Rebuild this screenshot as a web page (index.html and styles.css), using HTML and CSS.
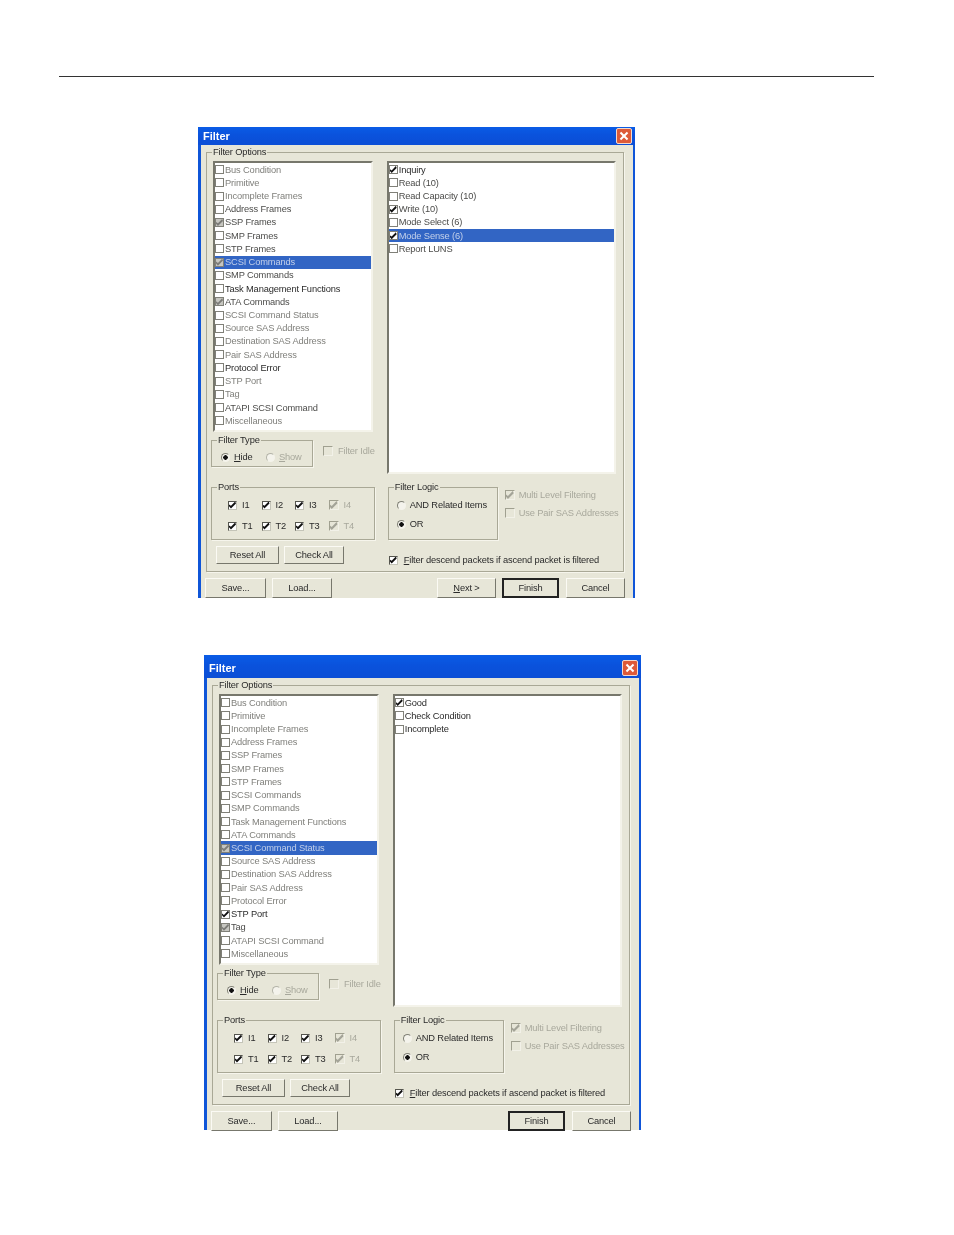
FILE: index.html
```html
<!DOCTYPE html>
<html lang="en">
<head>
<meta charset="utf-8">
<title>Filter</title>
<link rel="stylesheet" href="styles.css">
</head>
<body>
<div class="rule"></div>

<section class="dialog first">
  <div class="title"><span>Filter</span><b class="close"></b></div>
  <div class="options">
    <span class="legend">Filter Options</span>
    <div class="cols">
      <div class="left">
        <div class="list short">
          <div class="item dim"><i class="cb"></i>Bus Condition</div>
          <div class="item dim"><i class="cb"></i>Primitive</div>
          <div class="item dim"><i class="cb"></i>Incomplete Frames</div>
          <div class="item mid"><i class="cb"></i>Address Frames</div>
          <div class="item mid"><i class="cb grey on"></i>SSP Frames</div>
          <div class="item mid"><i class="cb"></i>SMP Frames</div>
          <div class="item mid"><i class="cb"></i>STP Frames</div>
          <div class="item sel"><i class="cb grey on"></i>SCSI Commands</div>
          <div class="item mid"><i class="cb"></i>SMP Commands</div>
          <div class="item"><i class="cb"></i>Task Management Functions</div>
          <div class="item mid"><i class="cb grey on"></i>ATA Commands</div>
          <div class="item dim"><i class="cb"></i>SCSI Command Status</div>
          <div class="item dim"><i class="cb"></i>Source SAS Address</div>
          <div class="item dim"><i class="cb"></i>Destination SAS Address</div>
          <div class="item dim"><i class="cb"></i>Pair SAS Address</div>
          <div class="item"><i class="cb"></i>Protocol Error</div>
          <div class="item dim"><i class="cb"></i>STP Port</div>
          <div class="item dim"><i class="cb"></i>Tag</div>
          <div class="item mid"><i class="cb"></i>ATAPI SCSI Command</div>
          <div class="item dim"><i class="cb"></i>Miscellaneous</div>
        </div>
        <div class="type-row">
          <div class="group type">
            <span class="legend">Filter Type</span>
            <span class="opt"><i class="radio on"></i><u>H</u>ide</span>
            <span class="opt off"><i class="radio"></i><u>S</u>how</span>
          </div>
          <span class="opt off idle"><i class="cb flat"></i>Filter Idle</span>
        </div>
        <div class="group ports">
          <span class="legend">Ports</span>
          <span class="port"><i class="cb on"></i>I1</span>
          <span class="port"><i class="cb on"></i>I2</span>
          <span class="port"><i class="cb on"></i>I3</span>
          <span class="port off"><i class="cb flat on"></i>I4</span>
          <span class="port"><i class="cb on"></i>T1</span>
          <span class="port"><i class="cb on"></i>T2</span>
          <span class="port"><i class="cb on"></i>T3</span>
          <span class="port off"><i class="cb flat on"></i>T4</span>
        </div>
        <div class="pair">
          <span class="btn reset">Reset All</span>
          <span class="btn check">Check All</span>
        </div>
      </div>
      <div class="right">
        <div class="list tall">
          <div class="item"><i class="cb on"></i>Inquiry</div>
          <div class="item mid"><i class="cb"></i>Read (10)</div>
          <div class="item mid"><i class="cb"></i>Read Capacity (10)</div>
          <div class="item mid"><i class="cb on"></i>Write (10)</div>
          <div class="item mid"><i class="cb"></i>Mode Select (6)</div>
          <div class="item sel"><i class="cb on"></i>Mode Sense (6)</div>
          <div class="item mid"><i class="cb"></i>Report LUNS</div>
        </div>
        <div class="logic-row">
          <div class="group logic">
            <span class="legend">Filter Logic</span>
            <span class="opt"><i class="radio"></i>AND Related Items</span>
            <span class="opt"><i class="radio on"></i>OR</span>
          </div>
          <div class="side">
            <span class="opt off"><i class="cb flat on"></i>Multi Level Filtering</span>
            <span class="opt off"><i class="cb flat"></i>Use Pair SAS Addresses</span>
          </div>
        </div>
        <span class="opt descend"><i class="cb on"></i><span><u>F</u>ilter descend packets if ascend packet is filtered</span></span>
      </div>
    </div>
  </div>
  <div class="footer">
    <span class="btn save">Save...</span>
    <span class="btn load">Load...</span>
    <span class="btn next"><u>N</u>ext &gt;</span>
    <span class="btn finish">Finish</span>
    <span class="btn cancel">Cancel</span>
  </div>
</section>

<section class="dialog second">
  <div class="title"><span>Filter</span><b class="close"></b></div>
  <div class="options">
    <span class="legend">Filter Options</span>
    <div class="cols">
      <div class="left">
        <div class="list short">
          <div class="item dim"><i class="cb"></i>Bus Condition</div>
          <div class="item dim"><i class="cb"></i>Primitive</div>
          <div class="item dim"><i class="cb"></i>Incomplete Frames</div>
          <div class="item dim"><i class="cb"></i>Address Frames</div>
          <div class="item dim"><i class="cb"></i>SSP Frames</div>
          <div class="item dim"><i class="cb"></i>SMP Frames</div>
          <div class="item dim"><i class="cb"></i>STP Frames</div>
          <div class="item dim"><i class="cb"></i>SCSI Commands</div>
          <div class="item dim"><i class="cb"></i>SMP Commands</div>
          <div class="item dim"><i class="cb"></i>Task Management Functions</div>
          <div class="item dim"><i class="cb"></i>ATA Commands</div>
          <div class="item sel"><i class="cb grey on"></i>SCSI Command Status</div>
          <div class="item dim"><i class="cb"></i>Source SAS Address</div>
          <div class="item dim"><i class="cb"></i>Destination SAS Address</div>
          <div class="item dim"><i class="cb"></i>Pair SAS Address</div>
          <div class="item dim"><i class="cb"></i>Protocol Error</div>
          <div class="item"><i class="cb on"></i>STP Port</div>
          <div class="item mid"><i class="cb grey on"></i>Tag</div>
          <div class="item dim"><i class="cb"></i>ATAPI SCSI Command</div>
          <div class="item dim"><i class="cb"></i>Miscellaneous</div>
        </div>
        <div class="type-row">
          <div class="group type">
            <span class="legend">Filter Type</span>
            <span class="opt"><i class="radio on"></i><u>H</u>ide</span>
            <span class="opt off"><i class="radio"></i><u>S</u>how</span>
          </div>
          <span class="opt off idle"><i class="cb flat"></i>Filter Idle</span>
        </div>
        <div class="group ports">
          <span class="legend">Ports</span>
          <span class="port"><i class="cb on"></i>I1</span>
          <span class="port"><i class="cb on"></i>I2</span>
          <span class="port"><i class="cb on"></i>I3</span>
          <span class="port off"><i class="cb flat on"></i>I4</span>
          <span class="port"><i class="cb on"></i>T1</span>
          <span class="port"><i class="cb on"></i>T2</span>
          <span class="port"><i class="cb on"></i>T3</span>
          <span class="port off"><i class="cb flat on"></i>T4</span>
        </div>
        <div class="pair">
          <span class="btn reset">Reset All</span>
          <span class="btn check">Check All</span>
        </div>
      </div>
      <div class="right">
        <div class="list tall">
          <div class="item"><i class="cb on"></i>Good</div>
          <div class="item"><i class="cb"></i>Check Condition</div>
          <div class="item"><i class="cb"></i>Incomplete</div>
        </div>
        <div class="logic-row">
          <div class="group logic">
            <span class="legend">Filter Logic</span>
            <span class="opt"><i class="radio"></i>AND Related Items</span>
            <span class="opt"><i class="radio on"></i>OR</span>
          </div>
          <div class="side">
            <span class="opt off"><i class="cb flat on"></i>Multi Level Filtering</span>
            <span class="opt off"><i class="cb flat"></i>Use Pair SAS Addresses</span>
          </div>
        </div>
        <span class="opt descend"><i class="cb on"></i><span><u>F</u>ilter descend packets if ascend packet is filtered</span></span>
      </div>
    </div>
  </div>
  <div class="footer">
    <span class="btn save">Save...</span>
    <span class="btn load">Load...</span>
    <span class="btn finish solo">Finish</span>
    <span class="btn cancel">Cancel</span>
  </div>
</section>
</body>
</html>
```

FILE: styles.css
```css
* { box-sizing: border-box; }

html, body { margin: 0; background: #fff; }

body {
  height: 1235px;
  overflow: hidden;
  font: 9.3px/12px "Liberation Sans", Arial, sans-serif;
  letter-spacing: -0.14px;
  color: #2a2a2a;
}

.rule {
  height: 1px;
  margin: 76px 80px 0 59px;
  background: #333;
}

.dialog {
  width: 437px;
  background: #e7e6d8;
  border-left: 3px solid #0f55d8;
  border-right: 2px solid #0f55d8;
  filter: blur(0.35px);
}

.first { height: 471px; margin: 50px 0 0 198px; }
.second { height: 475px; margin: 57px 0 0 204px; }

.title {
  display: flex;
  align-items: center;
  justify-content: space-between;
  height: 18px;
  margin: 0 -2px 0 -3px;
  padding: 0 3px 0 5px;
  background: linear-gradient(#0a5ce6, #0a52dc 45%, #0b4ed6);
  color: #fff;
  font: 700 11px/12px "Liberation Sans", Arial, sans-serif;
  letter-spacing: 0;
}

.second .title { height: 23px; padding-top: 3px; }

.close {
  position: relative;
  width: 16px;
  height: 16px;
  border: 1px solid #f3d9cc;
  border-radius: 2px;
  background: #dd5a38;
}

.close::before, .close::after {
  content: "";
  position: absolute;
  left: 2px;
  top: 6px;
  width: 10px;
  height: 2px;
  background: #fff;
  transform: rotate(45deg);
}

.close::after { transform: rotate(-45deg); }

.options, .group { position: relative; border: 1px solid #a9a896; box-shadow: 1px 1px 0 #f6f5ec; }

.options {
  width: 418px;
  margin: 7px 0 0 5px;
  padding: 8px 4px 5px;
}

.legend {
  position: absolute;
  top: -7px;
  left: 5px;
  padding: 0 1px;
  background: #e7e6d8;
  white-space: nowrap;
}

.cols { display: flex; gap: 13px; }
.left { width: 164px; }
.right { width: 236px; }

.list {
  background: #fff;
  border: 2px solid;
  border-color: #77776c #f4f3ea #f4f3ea #77776c;
}

.short { width: 160px; height: 271px; margin-left: 2px; }
.tall { width: 229px; height: 313px; margin-left: -1px; }

.item {
  display: flex;
  align-items: center;
  height: 13.22px;
  white-space: nowrap;
}

.dim { color: #80807c; }
.mid { color: #4c4c4a; }
.sel { background: #3265c4; color: #c3d0ea; }

.cb {
  position: relative;
  flex: none;
  width: 9px;
  height: 9px;
  margin-right: 1px;
  border: 1px solid #808078;
  background: #fff;
}

.cb.on::after {
  content: "";
  position: absolute;
  inset: 0;
  background: #111;
  clip-path: polygon(0 42%, 28% 62%, 88% 0, 100% 28%, 28% 100%, 0 68%);
}

.cb.grey { background: #c6c6c0; }
.cb.grey.on::after { background: #7c7c78; }
.cb.flat { width: 10px; height: 10px; background: #e7e6d8; border-color: #a0a090 #f2f1e8 #f2f1e8 #a0a090; }
.cb.flat.on::after { background: #a4a498; }

.radio {
  flex: none;
  width: 9px;
  height: 9px;
  margin-right: 4px;
  border: 1px solid;
  border-color: #808076 #f4f3ea #f4f3ea #808076;
  border-radius: 50%;
  background: #f4f3ec;
}

.off .radio { border-color: #b4b4a8 #f4f3ea #f4f3ea #b4b4a8; }
.radio.on { background: radial-gradient(circle, #111 0 2px, #f4f3ec 2.5px); }

.opt { display: flex; align-items: center; white-space: nowrap; }
.off { color: #a8a89c; }

.type-row { display: flex; align-items: flex-start; margin-top: 8px; }

.type {
  display: grid;
  grid-template-columns: 45px auto;
  flex: none;
  width: 102px;
  height: 27px;
  padding: 7px 0 0 9px;
}

.idle { margin: 5px 0 0 10px; }
.idle .cb { margin-right: 5px; }

.ports {
  display: grid;
  grid-template-columns: repeat(4, 33.5px);
  row-gap: 9px;
  align-content: start;
  height: 53px;
  margin-top: 20px;
  padding: 11px 0 0 16px;
}

.port { display: flex; align-items: center; }
.port .cb { margin-right: 5px; }
.port .cb, .descend .cb { border-color: #55554e #c4c4b8 #c4c4b8 #55554e; }
.port .cb.flat { border-color: #a0a090 #f2f1e8 #f2f1e8 #a0a090; }

.pair { display: flex; gap: 5px; margin: 6px 0 0 5px; }

.btn {
  display: flex;
  align-items: center;
  justify-content: center;
  height: 20px;
  padding-bottom: 1px;
  border: 1px solid;
  border-color: #fbfaf4 #77776c #77776c #fbfaf4;
  background: #e7e6d8;
}

.reset { width: 63px; height: 18px; }
.check { width: 60px; height: 18px; }

.logic-row { display: flex; gap: 7px; margin: 13px 0 0 0; }

.logic {
  display: flex;
  flex-direction: column;
  gap: 7px;
  width: 110px;
  height: 53px;
  padding: 11px 0 0 8px;
}

.side { display: flex; flex-direction: column; margin-top: -1px; }
.side .opt { height: 18px; }
.side .cb { margin-right: 4px; }

.descend { margin: 14px 0 0 1px; }
.descend .cb { margin-right: 6px; }

.footer { display: flex; margin: 6px 0 0 4px; }

.save { width: 61px; }
.load { width: 60px; margin-left: 6px; }
.next { width: 59px; margin-left: auto; }
.finish { width: 57px; margin-left: 6px; border: 2px solid #222; }
.solo { margin-left: auto; }
.cancel { width: 59px; margin-left: 7px; margin-right: 8px; }
```
